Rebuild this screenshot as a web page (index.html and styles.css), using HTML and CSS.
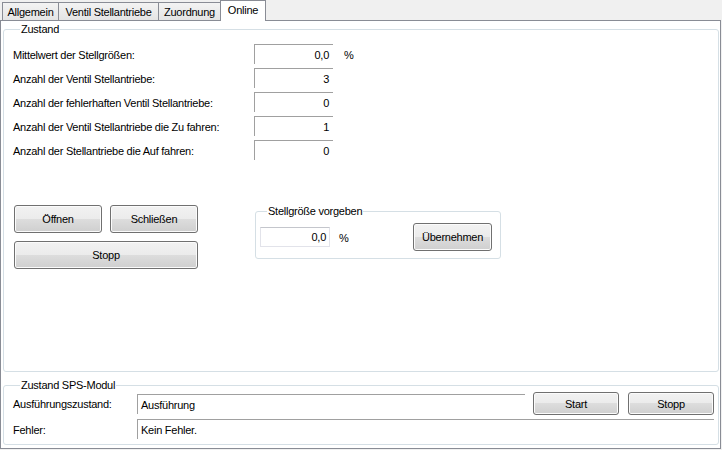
FILE: index.html
```html
<!DOCTYPE html>
<html lang="de">
<head>
<meta charset="utf-8">
<title>Online</title>
<link rel="stylesheet" href="styles.css">
</head>
<body>
<div class="window">
  <div class="tabs">
    <div class="tab t1">Allgemein</div>
    <div class="tab t2">Ventil Stellantriebe</div>
    <div class="tab t3">Zuordnung</div>
    <div class="tab active">Online</div>
  </div>
  <div class="panel">
    <fieldset class="group main">
      <legend>Zustand</legend>
      <div class="fields">
        <div class="field"><span class="lbl">Mittelwert der Stellgrößen:</span><span class="box">0,0</span><span class="unit">%</span></div>
        <div class="field"><span class="lbl">Anzahl der Ventil Stellantriebe:</span><span class="box">3</span></div>
        <div class="field"><span class="lbl">Anzahl der fehlerhaften Ventil Stellantriebe:</span><span class="box">0</span></div>
        <div class="field"><span class="lbl">Anzahl der Ventil Stellantriebe die Zu fahren:</span><span class="box">1</span></div>
        <div class="field"><span class="lbl">Anzahl der Stellantriebe die Auf fahren:</span><span class="box">0</span></div>
      </div>
      <div class="actions">
        <div class="btns">
          <button class="btn big">Öffnen</button>
          <button class="btn big">Schließen</button>
          <button class="btn big span">Stopp</button>
        </div>
        <fieldset class="group sub">
          <legend>Stellgröße vorgeben</legend>
          <div class="setrow">
            <span class="box2">0,0</span>
            <span class="unit2">%</span>
            <button class="btn apply">Übernehmen</button>
          </div>
        </fieldset>
      </div>
    </fieldset>
    <fieldset class="group sps">
      <legend>Zustand SPS-Modul</legend>
      <div class="spsrow r1">
        <span class="lbl2">Ausführungszustand:</span>
        <span class="tb">Ausführung</span>
        <button class="btn small start">Start</button>
        <button class="btn small stop">Stopp</button>
      </div>
      <div class="spsrow r2">
        <span class="lbl2">Fehler:</span>
        <span class="tb full">Kein Fehler.</span>
      </div>
    </fieldset>
  </div>
</div>
</body>
</html>
```

FILE: styles.css
```css
html, body {
  margin: 0;
  padding: 0;
}
body {
  background: #f0f0f0;
  font-family: "Liberation Sans", Arial, sans-serif;
  font-size: 11px;
  letter-spacing: -0.25px;
  color: #000;
}
.window {
  width: 722px;
  height: 450px;
}
.tabs {
  display: flex;
  align-items: flex-end;
  height: 20px;
  padding-left: 2px;
  box-sizing: border-box;
}
.tab {
  box-sizing: border-box;
  height: 18px;
  border: 1px solid #898c95;
  border-bottom: none;
  background: linear-gradient(#f3f3f3, #e4e4e4);
  display: flex;
  align-items: center;
  justify-content: center;
  margin-left: -1px;
  line-height: 13px;
  padding-top: 1px;
}
.tab:first-child { margin-left: 0; }
.t1 { width: 57px; }
.t2 { width: 101px; }
.t3 { width: 63px; }
.tab.active {
  width: 46px;
  height: 21px;
  margin-bottom: -1px;
  background: #fff;
  position: relative;
  z-index: 1;
  padding-top: 0;
  padding-bottom: 1px;
}
.panel {
  box-sizing: border-box;
  width: 721px;
  height: 429px;
  border: 1px solid #898c95;
  background: #fff;
  display: flex;
  flex-direction: column;
  padding: 2px 1px 3px 2px;
}
.group {
  margin: 0;
  padding: 0;
  border: 1px solid #d5dfe5;
  border-radius: 3px;
  min-width: 0;
}
.group legend {
  padding: 0 1px;
  margin-left: 7px;
  line-height: 13px;
}
.main {
  flex: 1;
  padding: 8px 8px 0 9px;
}
.fields {
  display: flex;
  flex-direction: column;
  gap: 4px;
}
.field {
  display: flex;
  align-items: center;
  height: 20px;
}
.lbl {
  width: 241px;
  padding-top: 2px;
}
.box {
  box-sizing: border-box;
  width: 79px;
  height: 20px;
  border-top: 1px solid #a0a0a0;
  border-left: 1px solid #a0a0a0;
  text-align: right;
  padding-right: 4px;
  line-height: 20px;
}
.unit {
  margin-left: 11px;
  padding-top: 2px;
}
.actions {
  display: flex;
  align-items: flex-start;
  margin-top: 45px;
}
.btns {
  display: grid;
  grid-template-columns: 88px 88px;
  gap: 8px;
  margin-left: 1px;
}
.btn {
  box-sizing: border-box;
  margin: 0;
  padding: 0;
  font: inherit;
  letter-spacing: inherit;
  color: #000;
  border: 1px solid #707070;
  border-radius: 3px;
  background: linear-gradient(#f2f2f2 0%, #ebebeb 50%, #dddddd 50%, #cfcfcf 100%);
  box-shadow: inset 0 0 0 1px #fbfbfb;
  text-align: center;
}
.btn.big { height: 28px; }
.btn.span { grid-column: 1 / 3; }
.sub {
  margin-left: 57px;
  width: 246px;
  box-sizing: border-box;
  padding: 5px 8px 7px 4px;
}
.setrow {
  display: flex;
  align-items: center;
}
.box2 {
  box-sizing: border-box;
  width: 70px;
  height: 20px;
  border: 1px solid #e2e3ea;
  border-top-color: #c4c6cc;
  text-align: right;
  padding-right: 3px;
  line-height: 19px;
}
.unit2 {
  margin-left: 9px;
  padding-top: 1px;
}
.btn.apply {
  margin-left: auto;
  width: 79px;
  height: 28px;
}
.sps {
  margin-top: 7px;
  padding: 0 4px 5px 9px;
}
.spsrow {
  display: flex;
  align-items: center;
}
.spsrow.r1 { height: 23px; }
.spsrow.r2 { height: 20px; margin-top: 4px; }
.lbl2 {
  width: 124px;
  padding-top: 1px;
}
.tb {
  box-sizing: border-box;
  width: 388px;
  height: 20px;
  border-top: 1px solid #a0a0a0;
  border-left: 1px solid #a0a0a0;
  padding-left: 3px;
  line-height: 20px;
}
.tb.full { width: 577px; }
.btn.small {
  width: 86px;
  height: 23px;
}
.btn.start { margin-left: 8px; }
.btn.stop { margin-left: 9px; }
```
